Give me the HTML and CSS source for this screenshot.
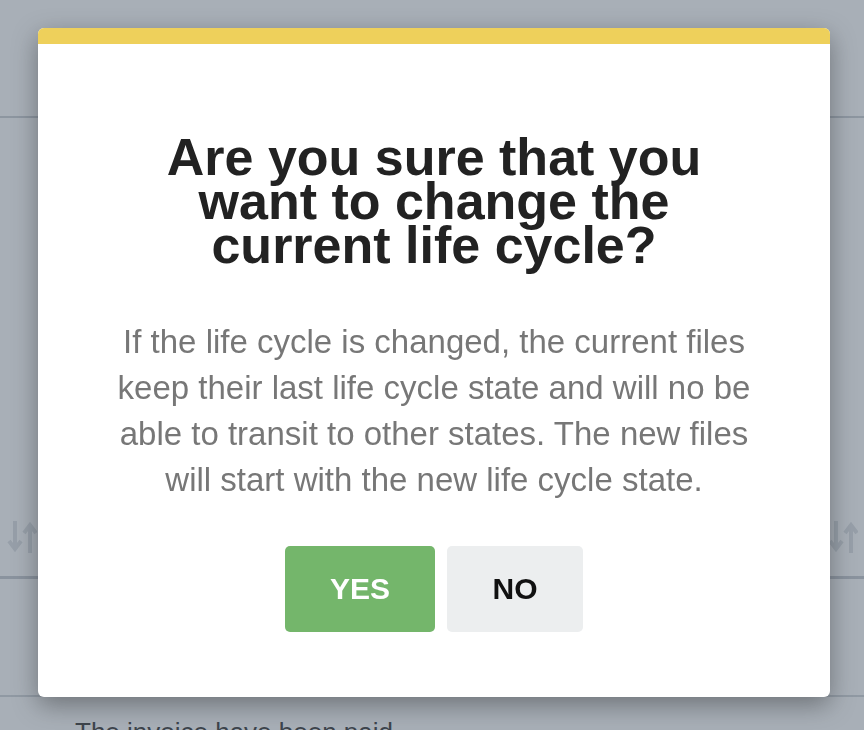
FILE: index.html
```html
<!DOCTYPE html>
<html lang="en">
<head>
    <meta charset="UTF-8">
    <meta name="viewport" content="width=device-width, initial-scale=1.0">
    <title>Change life cycle</title>
    <link rel="stylesheet" href="styles.css">
</head>
<body>
    <div class="page">
        <div class="page-top"></div>
        <div class="table-head">
            <svg class="sort-icon" width="30" height="34" viewBox="0 0 30 34">
                <path d="M8 1v27M2 21l6 8 6-8" fill="none" stroke="currentColor" stroke-width="4"/>
                <path d="M23 33V6M17 13l6-8 6 8" fill="none" stroke="currentColor" stroke-width="4"/>
            </svg>
            <svg class="sort-icon" width="30" height="34" viewBox="0 0 30 34">
                <path d="M8 1v27M2 21l6 8 6-8" fill="none" stroke="currentColor" stroke-width="4"/>
                <path d="M23 33V6M17 13l6-8 6 8" fill="none" stroke="currentColor" stroke-width="4"/>
            </svg>
        </div>
        <div class="table-row"></div>
        <div class="table-row text-row">The invoice have been paid</div>
    </div>

    <div class="overlay">
        <div class="modal">
            <div class="modal-bar"></div>
            <div class="modal-body">
                <h2>Are you sure that you want to change the current life cycle?</h2>
                <p>If the life cycle is changed, the current files keep their last life cycle state and will no be able to transit to other states. The new files will start with the new life cycle state.</p>
                <div class="actions">
                    <button class="btn btn-yes">YES</button>
                    <button class="btn btn-no">NO</button>
                </div>
            </div>
        </div>
    </div>
</body>
</html>
```

FILE: styles.css
```css
body {
    margin: 0;
    padding: 0;
    font-family: "Liberation Sans", Arial, sans-serif;
    background-color: #fff;
    overflow: hidden;
}

/* page behind the dialog */
.page {
    height: 730px;
}

.page-top {
    height: 116px;
    border-bottom: 2px solid #c8ccd1;
}

.table-head {
    height: 436px;
    padding: 0 0 22px 7px;
    display: flex;
    justify-content: space-between;
    align-items: flex-end;
    border-bottom: 3px solid #c2c6cc;
    color: #dcdfe2;
}

.sort-icon {
    margin-right: 6px;
}

.table-row {
    height: 116px;
    border-bottom: 2px solid #cfd3d7;
}

.text-row {
    height: auto;
    border: none;
    padding: 20px 0 0 75px;
    font-size: 26px;
    line-height: 30px;
    color: #2a2a2a;
}

/* dialog */
.overlay {
    position: fixed;
    top: 0;
    left: 0;
    right: 0;
    bottom: 0;
    background: rgba(81, 95, 111, 0.5);
    padding: 28px 34px 0 38px;
    display: flex;
    align-items: flex-start;
}

.modal {
    width: 792px;
    background: #fff;
    border-radius: 6px;
    overflow: hidden;
    box-shadow: 0 8px 26px rgba(0, 0, 0, 0.35);
}

.modal-bar {
    height: 16px;
    background: #eed05b;
}

.modal-body {
    padding: 91px 0 65px;
    text-align: center;
}

h2 {
    max-width: 600px;
    margin: 0 auto;
    font-size: 52px;
    line-height: 44px;
    font-weight: bold;
    color: #222;
}

p {
    max-width: 670px;
    margin: 52px auto 43px;
    font-size: 33px;
    line-height: 46px;
    color: #777;
}

.actions {
    display: flex;
    justify-content: center;
    gap: 12px;
}

.btn {
    height: 86px;
    padding: 0;
    border: none;
    border-radius: 5px;
    font-family: "Liberation Sans", Arial, sans-serif;
    font-size: 30px;
    font-weight: bold;
    cursor: pointer;
}

.btn-yes {
    width: 150px;
    background-color: #74b66b;
    color: #fff;
}

.btn-no {
    width: 136px;
    background-color: #eceeef;
    color: #111;
}
```
